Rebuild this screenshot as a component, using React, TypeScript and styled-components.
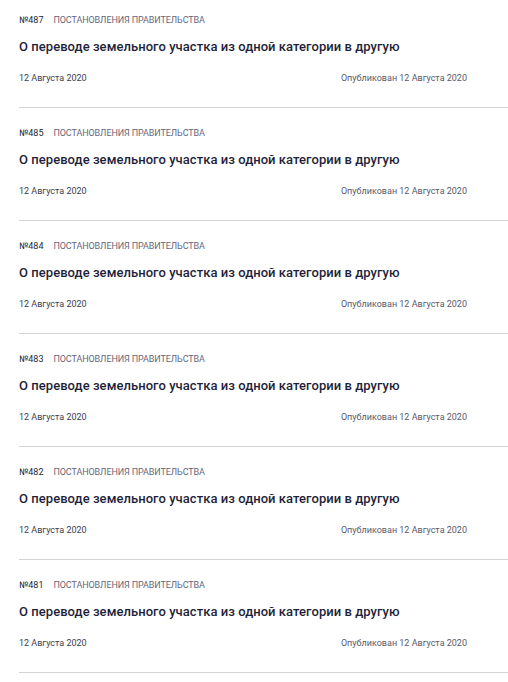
import React from 'react';
import styled, { createGlobalStyle } from 'styled-components';

const GlobalStyle = createGlobalStyle`
  body {
    margin: 0;
    background: #ffffff;
    font-family: Roboto, "Noto Sans", sans-serif;
  }
`;

const List = styled.ul`
  list-style: none;
  margin: 0;
  padding: 0 0 0 19px;
`;

const Item = styled.li`
  padding: 19px 41px 23px 0;
  border-bottom: 1px solid #d3d3d8;

  &:first-child {
    padding-top: 14px;
  }
`;

const Meta = styled.div`
  display: flex;
  gap: 10px;
  font-size: 9px;
  line-height: 12px;
`;

const Number = styled.span`
  color: #1f1f35;
`;

const Category = styled.span`
  color: #66667a;
  text-transform: uppercase;
  letter-spacing: -0.1px;
`;

const Title = styled.a`
  display: block;
  margin-top: 11px;
  font-size: 13px;
  line-height: 20px;
  font-weight: 500;
  letter-spacing: 0.05px;
  color: #1f1f3a;
  text-decoration: none;
`;

const DateRow = styled.div`
  display: flex;
  justify-content: space-between;
  margin-top: 15px;
  font-size: 9px;
  line-height: 12px;
  color: #3d3d4e;
`;

const Published = styled.span`
  color: #5a5a6c;
`;

type Decree = {
  id: number;
  category: string;
  title: string;
  date: string;
  published: string;
};

const decrees: Decree[] = [487, 485, 484, 483, 482, 481].map((id) => ({
  id,
  category: 'Постановления правительства',
  title: 'О переводе земельного участка из одной категории в другую',
  date: '12 Августа 2020',
  published: '12 Августа 2020',
}));

const App: React.FC = () => (
  <>
    <GlobalStyle />
    <List>
      {decrees.map((d) => (
        <Item key={d.id}>
          <Meta>
            <Number>№{d.id}</Number>
            <Category>{d.category}</Category>
          </Meta>
          <Title href="#">{d.title}</Title>
          <DateRow>
            <span>{d.date}</span>
            <Published>Опубликован {d.published}</Published>
          </DateRow>
        </Item>
      ))}
    </List>
  </>
);

export default App;
